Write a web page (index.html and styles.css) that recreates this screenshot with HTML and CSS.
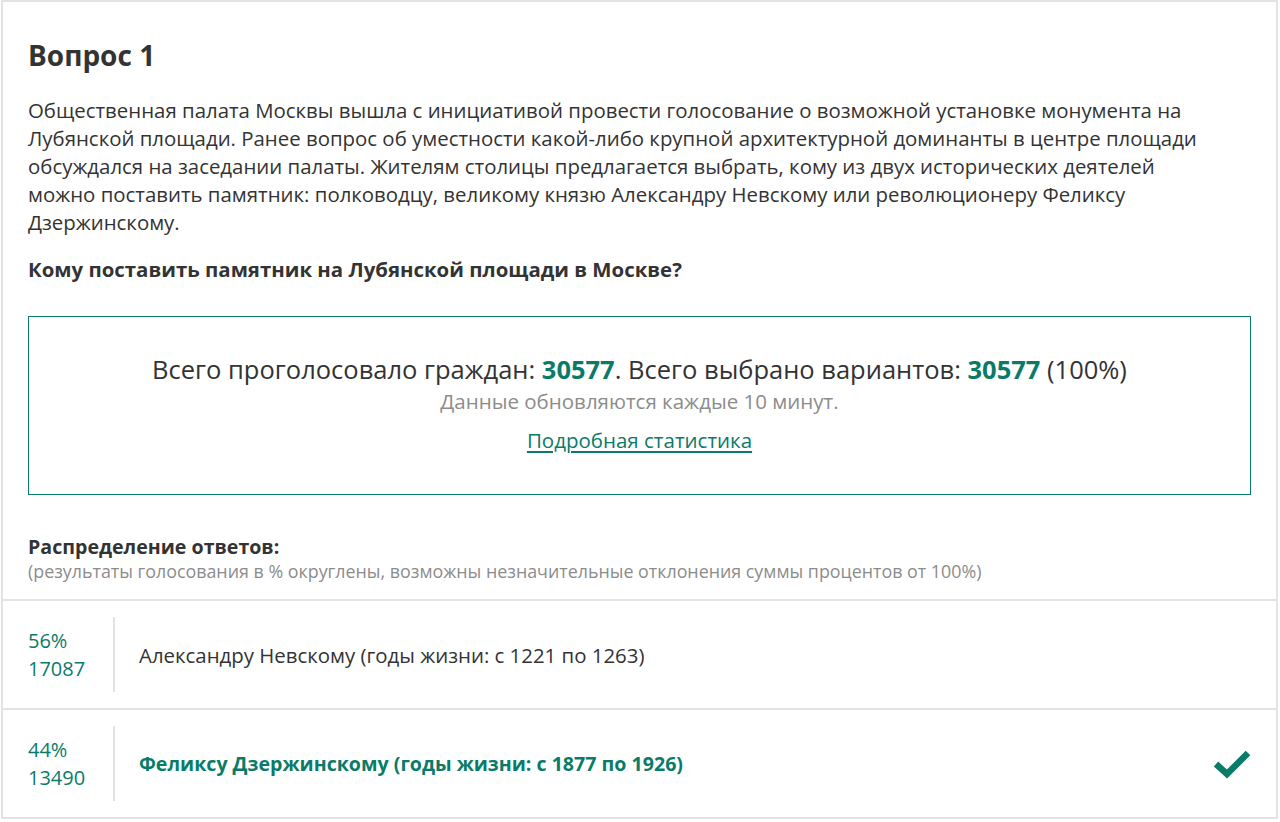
FILE: index.html
```html
<!DOCTYPE html>
<html lang="ru">
<head>
<meta charset="utf-8">
<link rel="stylesheet" href="styles.css">
</head>
<body>
<div class="card">
  <div class="inner">
    <h1 class="title">Вопрос 1</h1>
    <p class="desc">Общественная палата Москвы вышла с инициативой провести голосование о возможной установке монумента на Лубянской площади. Ранее вопрос об уместности какой-либо крупной архитектурной доминанты в центре площади обсуждался на заседании палаты. Жителям столицы предлагается выбрать, кому из двух исторических деятелей можно поставить памятник: полководцу, великому князю Александру Невскому или революционеру Феликсу Дзержинскому.</p>
    <p class="question">Кому поставить памятник на Лубянской площади в Москве?</p>
    <div class="stats">
      <div class="stats-main">Всего проголосовало граждан: <b class="num">30577</b>. Всего выбрано вариантов: <b class="num">30577</b> (100%)</div>
      <div class="stats-sub">Данные обновляются каждые 10 минут.</div>
      <a class="stats-link" href="#">Подробная статистика</a>
    </div>
    <div class="dist-title">Распределение ответов:</div>
    <div class="dist-note">(результаты голосования в % округлены, возможны незначительные отклонения суммы процентов от 100%)</div>
  </div>
  <div class="answers">
    <div class="answer">
      <div class="nums"><div>56%</div><div>17087</div></div>
      <div class="label">Александру Невскому (годы жизни: с 1221 по 1263)</div>
    </div>
    <div class="answer chosen">
      <div class="nums"><div>44%</div><div>13490</div></div>
      <div class="label">Феликсу Дзержинскому (годы жизни: с 1877 по 1926)</div>
      <svg class="check" width="38" height="30" viewBox="0 0 38 30"><path d="M3 15 L14 25 L35 4" fill="none" stroke="#0a7b68" stroke-width="6.5"/></svg>
    </div>
  </div>
</div>
</body>
</html>
```
FILE: styles.css
```css
* { box-sizing: border-box; }
body {
  margin: 0;
  background: #fff;
  font-family: "Open Sans", "Noto Sans", sans-serif;
  color: #333;
}
.card {
  width: 1277px;
  margin-left: 1px;
  border: 2px solid #e3e3e3;
}
.inner {
  padding: 34px 25px 18px 25px;
}
.title {
  margin: 0;
  font-size: 28px;
  line-height: 38px;
  font-weight: 700;
  color: #333;
}
.desc {
  margin: 22px 0 0;
  padding-right: 40px;
  font-size: 20.4px;
  line-height: 28px;
}
.question {
  margin: 19px 0 0;
  font-size: 20.4px;
  line-height: 28px;
  font-weight: 700;
}
.stats {
  margin-top: 33px;
  border: 1px solid #0a7b68;
  text-align: center;
  padding: 35px 10px 41px;
}
.stats-main {
  font-size: 25.5px;
  line-height: 34px;
}
.num { color: #0a7b68; font-weight: 700; }
.stats-sub {
  margin-top: 3px;
  font-size: 20.5px;
  line-height: 24px;
  color: #8c8c8c;
}
.stats-link {
  display: inline-block;
  margin-top: 14px;
  font-size: 20.5px;
  line-height: 26px;
  color: #0a7b68;
  text-decoration: underline;
  text-underline-offset: 3px;
}
.dist-title {
  margin-top: 38px;
  font-size: 19.6px;
  line-height: 28px;
  font-weight: 700;
}
.dist-note {
  font-size: 17.85px;
  line-height: 20px;
  color: #8c8c8c;
}
.answers { border-top: 2px solid #e3e3e3; }
.answer {
  display: flex;
  align-items: center;
  height: 109px;
  padding: 0 24px 0 25px;
  border-bottom: 2px solid #e3e3e3;
}
.answer:last-child { border-bottom: none; height: 107px; }
.nums {
  width: 87px;
  align-self: stretch;
  margin: 16px 0;
  border-right: 2px solid #e3e3e3;
  display: flex;
  flex-direction: column;
  justify-content: center;
  font-size: 20px;
  line-height: 28px;
  color: #0a7b68;
}
.label {
  flex: 1;
  padding-left: 24px;
  font-size: 20.4px;
  line-height: 28px;
}
.chosen .label { color: #0a7b68; font-weight: 700; font-size: 19.6px; }
.check { flex: none; margin-right: 1px; }
```
